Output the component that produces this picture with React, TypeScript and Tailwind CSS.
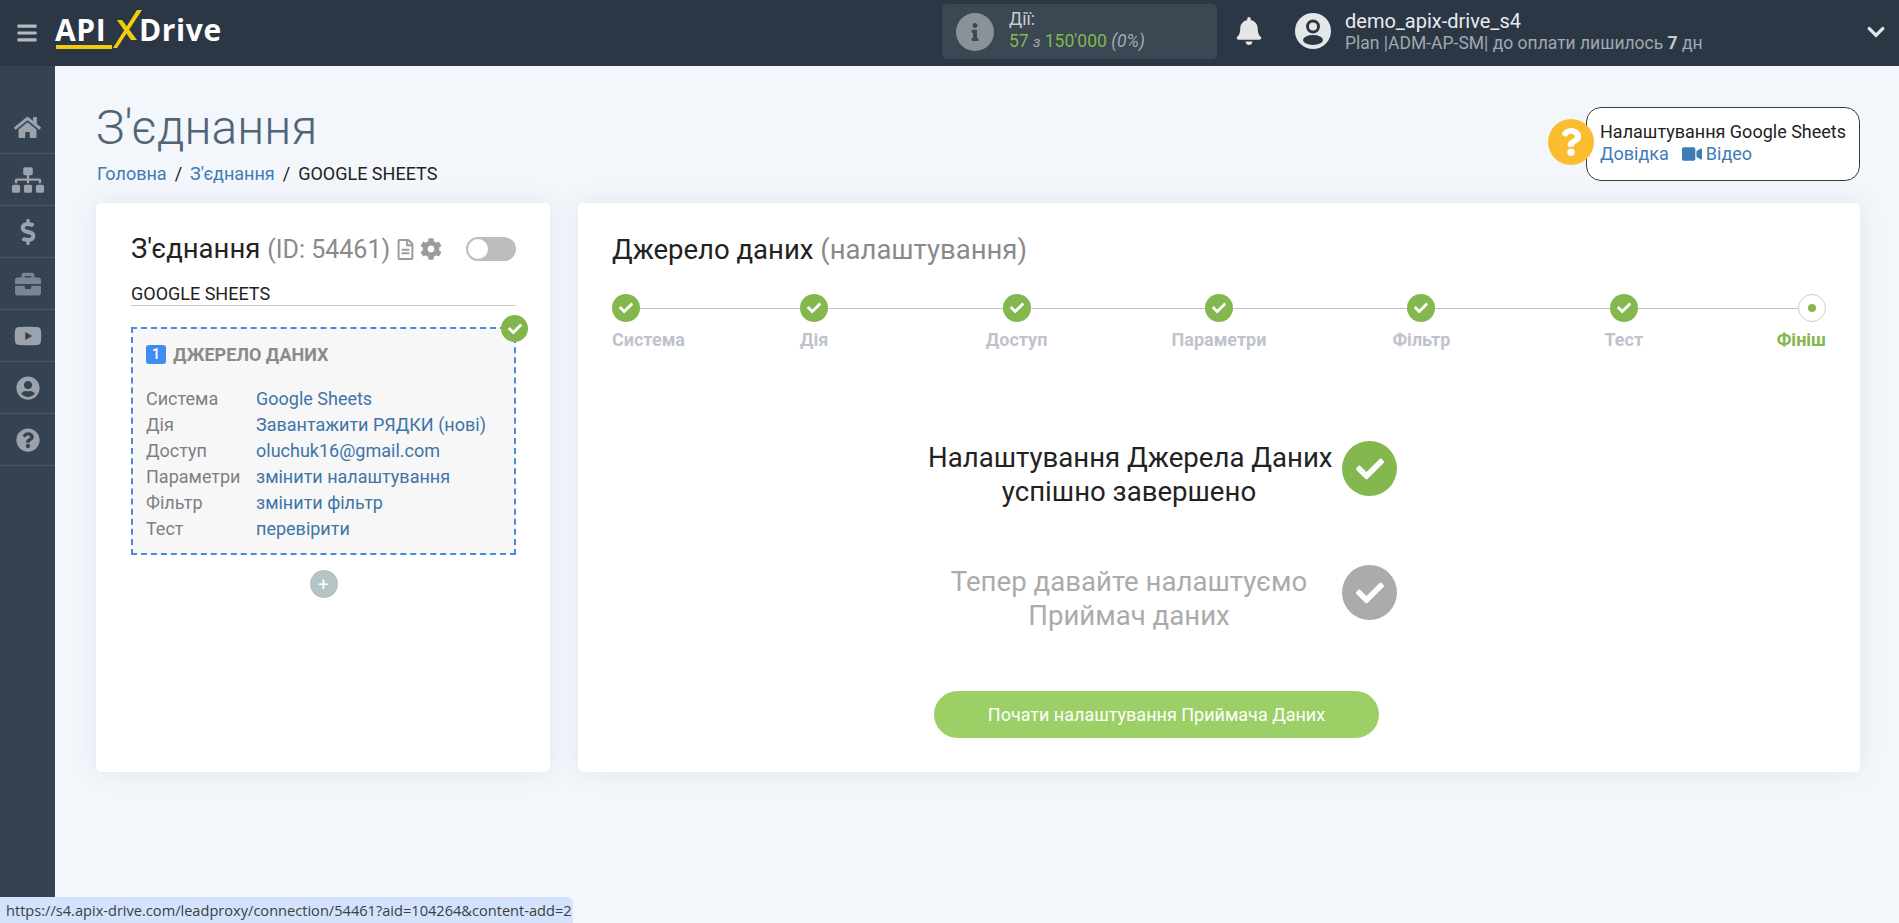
import {
  FaBars,
  FaBell,
  FaBriefcase,
  FaCheck,
  FaChevronDown,
  FaCog,
  FaDollarSign,
  FaHome,
  FaInfo,
  FaQuestion,
  FaQuestionCircle,
  FaRegFileAlt,
  FaSitemap,
  FaUserCircle,
  FaVideo,
  FaYoutube,
} from "react-icons/fa";

const sideItems = [
  { icon: FaHome, size: "text-[27px]", color: "text-[#9ba2ab]" },
  { icon: FaSitemap, size: "text-[32px]", color: "text-[#9ba2ab]" },
  { icon: FaDollarSign, size: "text-[26px]", color: "text-[#9ba2ab]" },
  { icon: FaBriefcase, size: "text-[26px]", color: "text-[#7b8592]" },
  { icon: FaYoutube, size: "text-[28px]", color: "text-[#9ba2ab]" },
  { icon: FaUserCircle, size: "text-[24px]", color: "text-[#9ba2ab]" },
  { icon: FaQuestionCircle, size: "text-[24px]", color: "text-[#9ba2ab]" },
];

const details = [
  ["Система", "Google Sheets"],
  ["Дія", "Завантажити РЯДКИ (нові)"],
  ["Доступ", "oluchuk16@gmail.com"],
  ["Параметри", "змінити налаштування"],
  ["Фільтр", "змінити фільтр"],
  ["Тест", "перевірити"],
];

const steps = ["Система", "Дія", "Доступ", "Параметри", "Фільтр", "Тест"];

const Logo = () => (
  <div className="h-[40px] ml-[17px] relative w-[170px] font-['Open_Sans',sans-serif] font-bold text-white text-[30px] leading-[30px] tracking-[0.6px]">
    <span className="absolute left-0 top-[2px]">API</span>
    <svg className="absolute left-[55px] top-[-3px] w-[32px] h-[38px]" viewBox="0 0 32 38">
      <path d="M3 38 L27 0 L32 0 L7 38 Z" fill="#f5cb0e" />
      <path d="M7 10 L12 10 L27 30 L21 30 Z" fill="#f5cb0e" />
    </svg>
    <span className="absolute left-[84px] top-[2px]">Drive</span>
    <div className="absolute left-[1px] top-[32px] w-[56px] h-[4px] bg-[#f5cb0e]" />
  </div>
);

const Avatar = () => (
  <svg className="ml-[32px] w-[36px] h-[36px] mt-[-4px] shrink-0" viewBox="0 0 36 36">
    <circle cx="18" cy="18" r="18" fill="#e4e6e8" />
    <circle cx="18" cy="13.5" r="5.5" fill="none" stroke="#2c3745" strokeWidth="3" />
    <ellipse cx="18" cy="27" rx="10" ry="5" fill="#2c3745" />
  </svg>
);

const Header = () => (
  <header className="h-[66px] bg-[#2c3745] flex items-center shrink-0 relative">
    <FaBars className="text-[#b5bac0] text-[22px] ml-[16px] shrink-0" />
    <Logo />
    <div className="ml-[717px] w-[275px] h-[55px] rounded-[5px] bg-[#3b4853] flex items-center mt-[-3px] pl-[14px]">
      <div className="w-[38px] h-[38px] rounded-full bg-[#8b9297] flex items-center justify-center">
        <FaInfo className="text-[#3b4853] text-[18px]" />
      </div>
      <div className="ml-[15px] mt-[-2px]">
        <div className="text-[#c9ced2] text-[17.5px] leading-[22px]">Дії:</div>
        <div className="text-[17.5px] leading-[22px] text-[#80b850]">
          57 <span className="italic text-[#a4abb0] text-[15px]">з</span> 150'000{" "}
          <span className="italic text-[#a4abb0]">(0%)</span>
        </div>
      </div>
    </div>
    <FaBell className="text-[#e4e6e8] text-[28px] ml-[18px] mt-[-4px]" />
    <Avatar />
    <div className="ml-[14px] mt-[-2px] whitespace-nowrap">
      <div className="text-[#e8eaec] text-[20px] leading-[22px]">demo_apix-drive_s4</div>
      <div className="text-[#a0a8b0] text-[17.5px] leading-[22px]">
        Plan |ADM-AP-SM| до оплати лишилось <b className="font-bold text-[#c5cad0]">7</b> дн
      </div>
    </div>
    <FaChevronDown className="absolute right-[13px] top-[22px] text-[#e4e6e8] text-[20px]" />
  </header>
);

const Sidebar = () => (
  <aside className="w-[55px] bg-[#354251] pt-[36px] shrink-0">
    {sideItems.map((item, i) => (
      <div key={i} className={`h-[52px] border-b border-[#4a5664] flex items-center justify-center ${item.color}`}>
        <item.icon className={item.size} />
      </div>
    ))}
  </aside>
);

const ConnectionCard = () => (
  <section className="w-[454px] bg-white rounded-[5px] shadow-[0_0_24px_rgba(80,100,130,0.10)] pl-[35px] pr-[34px] pt-[30px]">
    <div className="flex items-center h-[32px]">
      <span className="text-[27.5px] text-[#222] whitespace-nowrap">
        З'єднання <span className="text-[#8a8a8a] text-[25px]">(ID: 54461)</span>
      </span>
      <FaRegFileAlt className="text-[#9b9b9b] text-[21px] ml-[5px]" />
      <FaCog className="text-[#9b9b9b] text-[22px] ml-[4px]" />
      <div className="ml-auto w-[50px] h-[24px] rounded-full bg-[#bdbdbd] flex items-center pl-[2px]">
        <div className="w-[20px] h-[20px] rounded-full bg-white" />
      </div>
    </div>
    <div className="mt-[16px] h-[25px] leading-[26px] border-b border-[#c9c9c9] text-[18px] text-[#222]">GOOGLE SHEETS</div>
    <div className="relative mt-[21px] h-[228px] border-2 border-dashed border-[#4a8ade] bg-[#f7f7f7] pl-[13px] pt-[16px]">
      <div className="absolute right-[-14px] top-[-14px] w-[27px] h-[27px] rounded-full bg-[#82b54b] flex items-center justify-center">
        <FaCheck className="text-white text-[14px]" />
      </div>
      <div className="flex items-center h-[19px]">
        <span className="w-[20px] h-[19px] rounded-[3px] bg-[#3f8cf3] text-white text-[15px] font-medium flex items-center justify-center">1</span>
        <span className="ml-[7px] text-[18px] font-bold text-[#8a8a8a] whitespace-nowrap">ДЖЕРЕЛО ДАНИХ</span>
      </div>
      <div className="mt-[21px]">
        {details.map(([label, value]) => (
          <div key={label} className="flex h-[26px] items-center text-[18px] whitespace-nowrap">
            <span className="w-[110px] text-[#7d7f85]">{label}</span>
            <a className="text-[#3e74a8]">{value}</a>
          </div>
        ))}
      </div>
    </div>
    <div className="mt-[15px] mx-auto w-[28px] h-[28px] rounded-full bg-[#b4c5c6] flex items-center justify-center text-white text-[19px] leading-none">+</div>
  </section>
);

const Steps = () => (
  <div className="relative grid grid-cols-[101px_repeat(5,1fr)_101px] mt-[28px]">
    <div className="absolute left-0 right-0 top-[14px] h-[1px] bg-[#c4c4c4]" />
    {steps.map((label, i) => (
      <div key={label} className={`relative flex flex-col ${i === 0 ? "items-start" : "items-center"}`}>
        <div className="w-[28px] h-[28px] rounded-full bg-[#84b84f] flex items-center justify-center">
          <FaCheck className="text-white text-[14px]" />
        </div>
        <span className="mt-[6px] text-[18px] leading-[24px] font-bold text-[#bfc4cc] whitespace-nowrap">{label}</span>
      </div>
    ))}
    <div className="relative flex flex-col items-end">
      <div className="w-[28px] h-[28px] rounded-full bg-white border border-[#cfcfcf] flex items-center justify-center">
        <div className="w-[8px] h-[8px] rounded-full bg-[#84b84f]" />
      </div>
      <span className="mt-[6px] text-[18px] leading-[24px] font-bold text-[#84b84f]">Фініш</span>
    </div>
  </div>
);

const FinishRow = ({ top, bottom, muted }: { top: string; bottom: string; muted?: boolean }) => (
  <div className="flex items-start ml-[316px]">
    <div className={`w-[402px] text-center text-[27.6px] leading-[34px] whitespace-nowrap ${muted ? "text-[#ababab]" : "text-[#222]"}`}>
      {top}
      <br />
      {bottom}
    </div>
    <div className={`ml-[12px] w-[55px] h-[55px] rounded-full flex items-center justify-center ${muted ? "bg-[#ababab]" : "bg-[#84b84f]"}`}>
      <FaCheck className="text-white text-[28px]" />
    </div>
  </div>
);

const SourceCard = () => (
  <section className="flex-1 bg-white rounded-[5px] shadow-[0_0_24px_rgba(80,100,130,0.10)] px-[34px] pt-[31px]">
    <h2 className="text-[27.5px] leading-[32px] text-[#222]">
      Джерело даних <span className="text-[#8a8a8a]">(налаштування)</span>
    </h2>
    <Steps />
    <div className="mt-[89px]">
      <FinishRow top="Налаштування Джерела Даних" bottom="успішно завершено" />
    </div>
    <div className="mt-[56px]">
      <FinishRow top="Тепер давайте налаштуємо" bottom="Приймач даних" muted />
    </div>
    <button className="block mt-[58px] ml-[322px] w-[445px] h-[47px] rounded-full bg-[#9ccf65] text-white text-[18px]">
      Почати налаштування Приймача Даних
    </button>
  </section>
);

export default function App() {
  return (
    <div className="h-screen overflow-hidden relative flex flex-col bg-[#f3f6fb] font-['Roboto',sans-serif]">
      <Header />
      <div className="flex flex-1 min-h-0">
        <Sidebar />
        <main className="flex-1 pl-[41px] pr-[39px]">
          <div className="flex justify-between items-start h-[137px]">
            <div className="pt-[38px]">
              <h1 className="text-[48px] leading-[48px] font-light text-[#4f6475]">З'єднання</h1>
              <div className="mt-[10px] ml-[1px] text-[18px] leading-[24px] text-[#222] whitespace-nowrap">
                <a className="text-[#3e7cb5]">Головна</a>
                <span className="mx-[8px]">/</span>
                <a className="text-[#3e7cb5]">З'єднання</a>
                <span className="mx-[8px]">/</span>
                GOOGLE SHEETS
              </div>
            </div>
            <div className="flex items-center mt-[41px]">
              <div className="relative z-10 w-[46px] h-[46px] mt-[-4px] rounded-full bg-[#fbbd30] flex items-center justify-center mr-[-8px]">
                <FaQuestion className="text-white text-[28px]" />
              </div>
              <div className="w-[274px] h-[74px] rounded-[15px] border border-[#3a3a3a] bg-white pl-[13px] pt-[13px]">
                <div className="text-[18px] leading-[22px] text-[#222] whitespace-nowrap">Налаштування Google Sheets</div>
                <div className="flex items-center text-[18px] leading-[22px] text-[#3e7cb5]">
                  Довідка
                  <FaVideo className="ml-[13px] mr-[4px] text-[20px]" />
                  Відео
                </div>
              </div>
            </div>
          </div>
          <div className="flex gap-[28px] h-[569px]">
            <ConnectionCard />
            <SourceCard />
          </div>
        </main>
      </div>
      <div className="absolute left-0 bottom-0 h-[26px] w-[573px] bg-[#d3e3fd] rounded-tr-[6px] pl-[6px] text-[14.6px] leading-[26px] text-[#3c4043] font-['Open_Sans',sans-serif] whitespace-nowrap">
        https://s4.apix-drive.com/leadproxy/connection/54461?aid=104264&amp;content-add=2
      </div>
    </div>
  );
}
